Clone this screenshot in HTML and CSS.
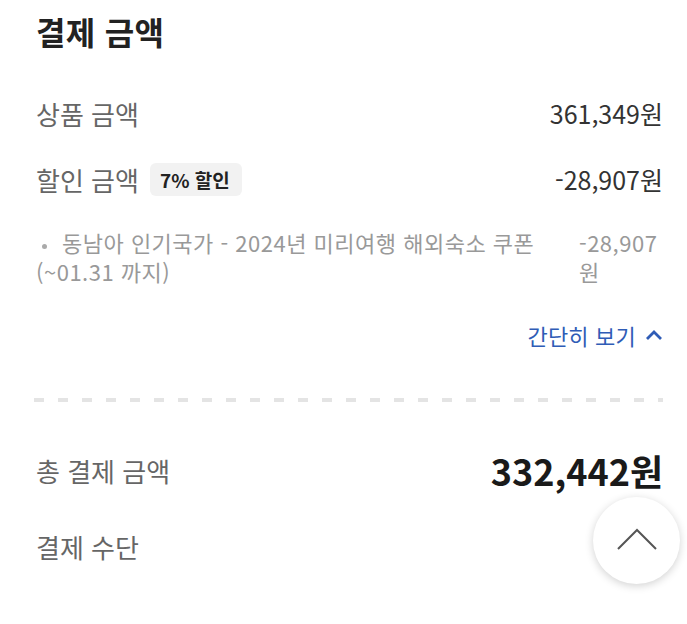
FILE: index.html
```html
<!DOCTYPE html>
<html lang="ko">
<head>
    <meta charset="UTF-8">
    <title>결제 금액</title>
    <link rel="stylesheet" href="styles.css">
</head>
<body>
    <div class="pay">
        <h2 class="pay-title">결제 금액</h2>

        <div class="row row-first">
            <span class="label">상품 금액</span>
            <span class="value">361,349원</span>
        </div>
        <div class="row row-discount">
            <span class="label">할인 금액 <em class="badge">7% 할인</em></span>
            <span class="value">-28,907원</span>
        </div>

        <div class="detail">
            <p class="detail-text"><span class="dot"></span>동남아 인기국가 - 2024년 미리여행 해외숙소 쿠폰 (~01.31 까지)</p>
            <p class="detail-value">-28,907원</p>
        </div>

        <div class="toggle">
            <a class="toggle-link">간단히 보기
                <svg width="18" height="12" viewBox="0 0 18 12"><polyline points="2,10 9,3 16,10" fill="none" stroke="#2f5cb6" stroke-width="2.8"/></svg>
            </a>
        </div>

        <div class="dash"></div>

        <div class="row row-total">
            <span class="label">총 결제 금액</span>
            <span class="total">332,442원</span>
        </div>
        <div class="row row-method">
            <span class="label">결제 수단</span>
        </div>
    </div>

    <div class="top-btn">
        <svg width="42" height="24" viewBox="0 0 42 24"><polyline points="2,22 21,3 40,22" fill="none" stroke="#555" stroke-width="2"/></svg>
    </div>
</body>
</html>
```

FILE: styles.css
```css
body{
    margin:0;
    background:#fff;
    font-family:"Noto Sans CJK KR","Noto Sans",sans-serif;
}
.pay{
    padding:11px 24px 40px 36px;
}
.pay-title{
    margin:0;
    font-size:32px;
    line-height:40px;
    font-weight:700;
    color:#222;
    letter-spacing:0.3px;
}
.row{
    display:flex;
    justify-content:space-between;
    align-items:center;
    height:36px;
}
.row-first{margin-top:44px;}
.row-discount{margin-top:30px;}
.label{
    display:flex;
    align-items:center;
    font-size:26px;
    color:#666;
}
.value{
    font-size:25px;
    color:#333;
}
.badge{
    font-style:normal;
    margin-left:11px;
    height:33px;
    line-height:33px;
    padding:0 12px 0 10px;
    border-radius:6px;
    background:#f2f2f2;
    color:#222;
    font-size:19px;
    font-weight:700;
}
.detail{
    display:flex;
    justify-content:space-between;
    gap:36px;
    margin-top:31px;
    font-size:22px;
    line-height:29px;
    color:#999;
    letter-spacing:0.5px;
}
.detail p{margin:0;}
.detail-text{flex:1;}
.dot{
    display:inline-block;
    width:5px;
    height:5px;
    border-radius:50%;
    background:#aaa;
    margin:0 15px 0 6px;
    vertical-align:middle;
}
.detail-value{
    width:84px;
    flex:none;
    overflow-wrap:anywhere;
}
.toggle{
    display:flex;
    justify-content:flex-end;
    margin-top:34px;
}
.toggle-link{
    display:flex;
    align-items:center;
    gap:9px;
    font-size:22px;
    line-height:30px;
    color:#2f5cb6;
    letter-spacing:0.2px;
    cursor:pointer;
}
.dash{
    margin-top:48px;
    height:4px;
    background-image:linear-gradient(to right,#e4e4e4 10px,transparent 10px);
    background-size:24px 4px;
    margin-left:-2px;
}
.row-total{
    margin-top:46px;
    height:44px;
}
.total{
    font-size:36px;
    font-weight:700;
    color:#1a1a1a;
}
.row-method{margin-top:36px;}
.top-btn{
    position:fixed;
    right:7px;
    bottom:40px;
    width:87px;
    height:87px;
    border-radius:50%;
    background:#fff;
    box-shadow:0 2px 8px rgba(0,0,0,0.18);
    display:flex;
    align-items:center;
    justify-content:center;
    cursor:pointer;
}
.top-btn svg{margin-top:-4px;}
```
